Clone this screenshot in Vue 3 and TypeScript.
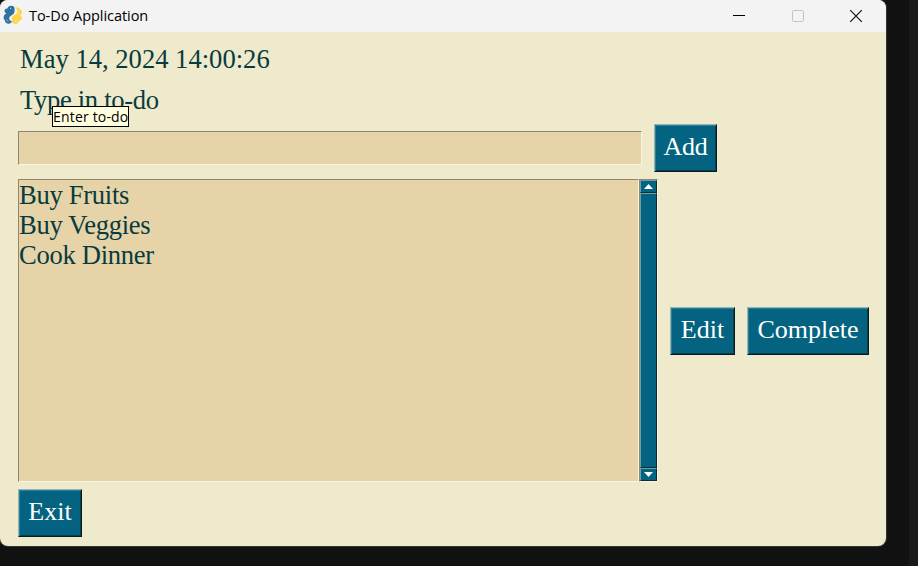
<script setup lang="ts">
import { ref } from 'vue'

const timestamp = ref('May 14, 2024 14:00:26')
const draft = ref('')
const todos = ref<string[]>(['Buy Fruits', 'Buy Veggies', 'Cook Dinner'])

function addTodo(): void {
  const text = draft.value.trim()
  if (!text) return
  todos.value.push(text)
  draft.value = ''
}
</script>

<template>
  <div class="desktop">
    <main class="window">
      <header class="titlebar">
        <svg class="logo" width="20" height="20" viewBox="0 0 20 20">
          <path fill="#31709f" d="M4.500 3.500C5 1.500 6.500 .5 8.500 .7C10.500 .8 11.500 2 11.500 3.500V6.500C11.500 8 10.500 9 9.300 9.800L7.300 11.200C6.300 12 6 12.800 6.300 14C6.700 15.500 7.500 16 9 16.300C8.500 18 7 19 5 18.700C3 18.500 2 17 1.800 15.200C.6 14 .4 12.500 .9 11C1.300 9.800 2.500 8.900 3.400 8.300C1.800 7.700 1.200 6.500 1.600 5.200C2 4 3 3.500 4.500 3.500Z" />
          <path fill="#fdd649" d="M12.300 2.800C14.500 1.900 16.500 2.500 17.300 4.500C18.900 5.200 19.400 6.800 18.800 8.200C18.400 9.200 18 9.800 17.300 10.300C18.700 11 19.200 12.500 18.600 14C18.100 15.200 17.300 15.800 16 16C15.500 18 14 19 12 18.900C10 18.800 8.900 17.500 8.900 15.500V13.300C8.900 11.800 9.800 11 11 10.300L13.100 8.900C14.300 8 14.700 7 14.200 5.600C13.900 4.600 13.200 3.700 12.300 2.800Z" />
          <circle cx="7.600" cy="3.300" r=".6" fill="#d5e4ef" />
          <circle cx="12.800" cy="16.200" r=".6" fill="#fff8d8" />
          <path d="M3.500 14.500Q4 16.300 5.600 16.500M16.600 6.500Q16.500 8 15.500 9" fill="none" stroke="#e3ecef" stroke-width=".5" />
        </svg>
        <h1 class="caption">To-Do Application</h1>
        <div class="controls">
          <svg width="14" height="14" viewBox="0 0 14 14"><path d="M1 6.500H13" stroke="#000" /></svg>
          <svg width="14" height="14" viewBox="0 0 14 14"><rect x="1.500" y="1.500" width="11" height="11" rx="1" fill="none" stroke="#c3c3c3" /></svg>
          <svg width="14" height="14" viewBox="0 0 14 14"><path d="M1.200 1.200L12.800 12.800M12.800 1.200L1.200 12.800" stroke="#111" stroke-width="1.200" /></svg>
        </div>
      </header>

      <section class="body">
        <p class="label">{{ timestamp }}</p>
        <div class="label prompt">
          Type in to-do
          <span class="tooltip">Enter to-do</span>
        </div>
        <div class="entry-row">
          <input v-model="draft" class="entry" type="text" aria-label="Enter to-do" />
          <button class="btn add" @click="addTodo">Add</button>
        </div>
        <div class="list-row">
          <div class="list-frame">
            <ul class="list">
              <li v-for="todo in todos" :key="todo">{{ todo }}</li>
            </ul>
            <div class="scrollbar">
              <span class="arrow"><svg width="9" height="5" viewBox="0 0 9 5"><path d="M0 5L4.500 0L9 5Z" fill="#fff" /></svg></span>
              <span class="thumb"></span>
              <span class="arrow"><svg width="9" height="5" viewBox="0 0 9 5"><path d="M0 0L4.500 5L9 0Z" fill="#fff" /></svg></span>
            </div>
          </div>
          <button class="btn edit">Edit</button>
          <button class="btn complete">Complete</button>
        </div>
        <button class="btn exit">Exit</button>
      </section>
    </main>
  </div>
</template>

<style>
body {
  margin: 0;
  overflow: hidden;
}
</style>

<style scoped>
.desktop {
  width: 918px;
  height: 566px;
  background: linear-gradient(90deg, #111 0, #111 909px, #1a1a1a 909px);
}
.window {
  display: flex;
  flex-direction: column;
  width: 886px;
  height: 546px;
  overflow: hidden;
  border-radius: 8px;
  background: #eeeacb;
  box-shadow: 0 0 0 1px #343432;
}
.titlebar {
  display: flex;
  align-items: center;
  flex: none;
  box-sizing: border-box;
  height: 32px;
  padding: 0 23px 0 3px;
  background: #f3f3f3;
}
.logo {
  margin-top: -2px;
}
.caption {
  margin: 0 0 0 6px;
  font: 400 14.500px/20px "Open Sans", sans-serif;
  letter-spacing: -0.050px;
  color: #000;
}
.controls {
  display: flex;
  gap: 44.500px;
  margin-left: auto;
}
.body {
  display: flex;
  flex-direction: column;
  align-items: flex-start;
  padding: 11px 17px 0 18px;
  font-family: "Liberation Serif", serif;
  font-size: 26.600px;
  color: #083b40;
}
.label {
  position: relative;
  height: 32px;
  margin: 0 0 0 2px;
  line-height: 32px;
}
.prompt {
  margin-top: 9px;
  letter-spacing: -0.330px;
}
.tooltip {
  position: absolute;
  left: 32px;
  top: 22px;
  box-sizing: border-box;
  width: 77px;
  height: 21px;
  border: 1px solid #000;
  background: #ffffe0;
  font: 14px/20px "Open Sans", sans-serif;
  letter-spacing: 0.180px;
  white-space: nowrap;
  color: #000;
}
.entry-row {
  display: flex;
  align-items: center;
  height: 48px;
  margin-top: 8px;
}
.entry {
  box-sizing: border-box;
  width: 624px;
  height: 34px;
  margin: 0 0 1px;
  padding: 0;
  border: 1px solid;
  border-color: #8f866f #fbf5dc #fbf5dc #8f866f;
  outline: 0;
  background: #e6d3a8;
  font: inherit;
  color: inherit;
}
.btn {
  box-sizing: border-box;
  flex: none;
  height: 48px;
  padding: 0 0 2px;
  border: 1px solid;
  border-color: #8db4b6 #0b1a20 #0b1a20 #8db4b6;
  background: #046380;
  box-shadow: inset 1px 1px #327f95, inset -1px -1px #08404f;
  font: inherit;
  font-size: 26px;
  line-height: 44px;
  color: #fff;
}
.add {
  width: 63px;
  margin-left: 12px;
  letter-spacing: -0.300px;
}
.list-row {
  display: flex;
  align-items: center;
  height: 303px;
  margin-top: 7px;
}
.list-frame {
  display: flex;
  width: 640px;
  height: 303px;
}
.list {
  box-sizing: border-box;
  width: 621px;
  margin: 0;
  padding: 0;
  border: 1px solid;
  border-color: #8f866f #fbf5dc #fbf5dc #8f866f;
  background: #e6d3a8;
  line-height: 30px;
  letter-spacing: -0.300px;
  list-style: none;
}
.scrollbar {
  display: flex;
  flex-direction: column;
  box-sizing: border-box;
  width: 19px;
  height: 303px;
  border: 1px solid;
  border-color: #8f866f #fbf5dc #fbf5dc #8f866f;
  background: #046380;
}
.arrow,
.thumb {
  box-sizing: border-box;
  border: 1px solid;
  border-color: #6aa0ad #102a31 #102a31 #6aa0ad;
}
.arrow {
  display: flex;
  align-items: center;
  justify-content: center;
  height: 13px;
}
.thumb {
  flex: 1;
}
.edit {
  width: 65px;
  margin-left: 12px;
}
.complete {
  width: 122px;
  margin-left: 12px;
}
.exit {
  width: 64px;
  margin-top: 7px;
}
</style>
